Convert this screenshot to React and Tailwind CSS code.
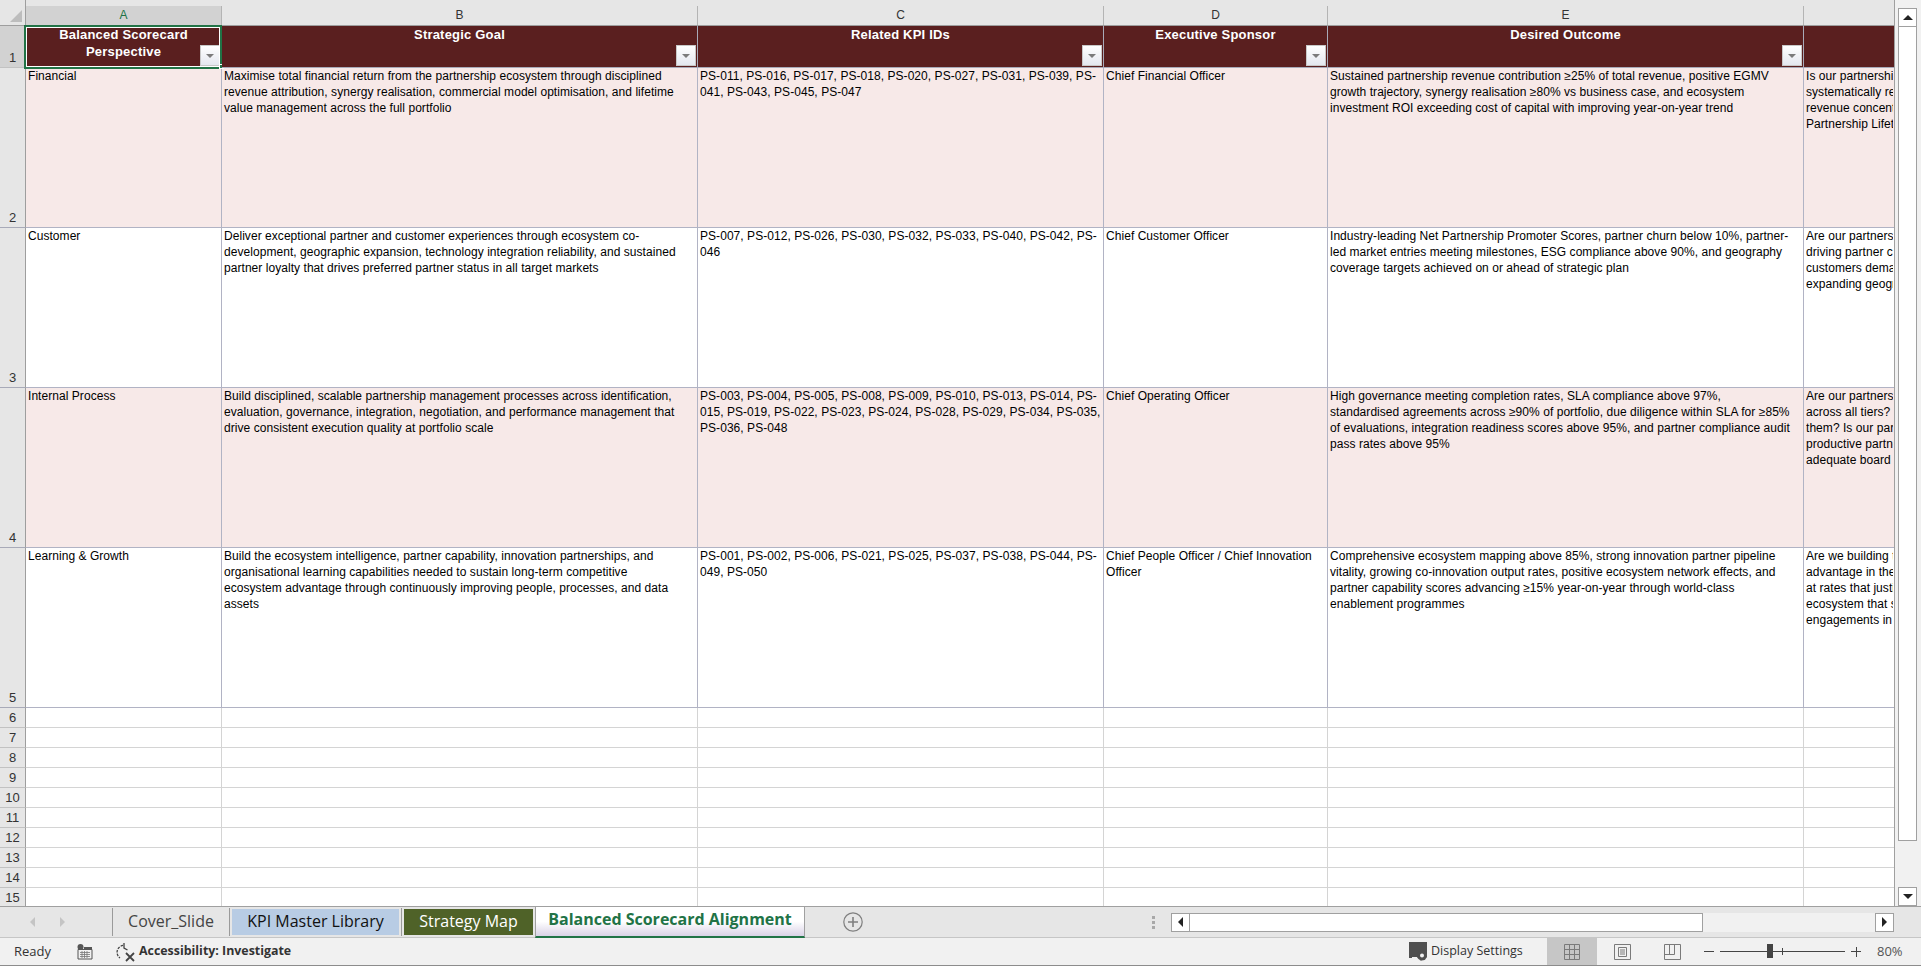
// Excel window: Balanced Scorecard Alignment sheet
import React from 'react';

const rows = [
  {
    rose: true,
    a: ['Financial'],
    b: [
      'Maximise total financial return from the partnership ecosystem through disciplined',
      'revenue attribution, synergy realisation, commercial model optimisation, and lifetime',
      'value management across the full portfolio',
    ],
    c: ['PS-011, PS-016, PS-017, PS-018, PS-020, PS-027, PS-031, PS-039, PS-', '041, PS-043, PS-045, PS-047'],
    d: ['Chief Financial Officer'],
    e: [
      'Sustained partnership revenue contribution ≥25% of total revenue, positive EGMV',
      'growth trajectory, synergy realisation ≥80% vs business case, and ecosystem',
      'investment ROI exceeding cost of capital with improving year-on-year trend',
    ],
    f: ['Is our partnership ecosystem', 'systematically reducing', 'revenue concentration', 'Partnership Lifetime'],
  },
  {
    a: ['Customer'],
    b: [
      'Deliver exceptional partner and customer experiences through ecosystem co-',
      'development, geographic expansion, technology integration reliability, and sustained',
      'partner loyalty that drives preferred partner status in all target markets',
    ],
    c: ['PS-007, PS-012, PS-026, PS-030, PS-032, PS-033, PS-040, PS-042, PS-', '046'],
    d: ['Chief Customer Officer'],
    e: [
      'Industry-leading Net Partnership Promoter Scores, partner churn below 10%, partner-',
      'led market entries meeting milestones, ESG compliance above 90%, and geography',
      'coverage targets achieved on or ahead of strategic plan',
    ],
    f: ['Are our partnerships', 'driving partner choice', 'customers demand', 'expanding geography'],
  },
  {
    rose: true,
    a: ['Internal Process'],
    b: [
      'Build disciplined, scalable partnership management processes across identification,',
      'evaluation, governance, integration, negotiation, and performance management that',
      'drive consistent execution quality at portfolio scale',
    ],
    c: [
      'PS-003, PS-004, PS-005, PS-008, PS-009, PS-010, PS-013, PS-014, PS-',
      '015, PS-019, PS-022, PS-023, PS-024, PS-028, PS-029, PS-034, PS-035,',
      'PS-036, PS-048',
    ],
    d: ['Chief Operating Officer'],
    e: [
      'High governance meeting completion rates, SLA compliance above 97%,',
      'standardised agreements across ≥90% of portfolio, due diligence within SLA for ≥85%',
      'of evaluations, integration readiness scores above 95%, and partner compliance audit',
      'pass rates above 95%',
    ],
    f: ['Are our partnerships', 'across all tiers? Can', 'them? Is our partner', 'productive partnering', 'adequate board'],
  },
  {
    a: ['Learning & Growth'],
    b: [
      'Build the ecosystem intelligence, partner capability, innovation partnerships, and',
      'organisational learning capabilities needed to sustain long-term competitive',
      'ecosystem advantage through continuously improving people, processes, and data',
      'assets',
    ],
    c: ['PS-001, PS-002, PS-006, PS-021, PS-025, PS-037, PS-038, PS-044, PS-', '049, PS-050'],
    d: ['Chief People Officer / Chief Innovation', 'Officer'],
    e: [
      'Comprehensive ecosystem mapping above 85%, strong innovation partner pipeline',
      'vitality, growing co-innovation output rates, positive ecosystem network effects, and',
      'partner capability scores advancing ≥15% year-on-year through world-class',
      'enablement programmes',
    ],
    f: ['Are we building the', 'advantage in the market', 'at rates that justify', 'ecosystem that sustains', 'engagements in'],
  },
];

const emptyRows = [6, 7, 8, 9, 10, 11, 12, 13, 14, 15];

function ColHead({ label, active }) {
  return (
    <div className="h-[26px] pt-[6px] bg-[#e6e6e6] border-b border-b-[#9e9e9e]">
      <div
        className={`h-[19px] border-r border-[#b4b4b4] text-center text-[12px] leading-[19px] ${active ? 'bg-[#d2d2d2] text-[#217346]' : 'text-[#333]'}`}
      >
        {label}
      </div>
    </div>
  );
}

function RowHead({ n, active, dark }) {
  return (
    <div
      className={`flex items-end justify-center border-r border-b border-r-[#9e9e9e] text-[13px] leading-[19px] text-[#333] ${active ? 'bg-[#d2d2d2]' : 'bg-[#e6e6e6]'} ${dark ? 'border-b-[#a8aab8]' : 'border-b-[#c2c2c2]'}`}
    >
      {n}
    </div>
  );
}

function FilterButton() {
  return (
    <div className="absolute right-[1px] bottom-[1px] w-[20px] h-[21px] bg-gradient-to-b from-white to-[#e4e7ef] border border-[#c8c8c8] flex items-center justify-center">
      <div className="w-0 h-0 border-x-[4px] border-x-transparent border-t-[4px] border-t-[#7b7b7b]" />
    </div>
  );
}

function HeadCell({ lines, filter = true, selected, last }) {
  return (
    <div
      className={`relative bg-[#5a1f1f] text-white font-bold text-[13px] leading-[17px] text-center border-b border-b-[#a8aab8] tracking-[0.2px] ${last ? '' : 'border-r border-r-[#a8aab8]'}`}
    >
      {lines.map((l) => (
        <div key={l} className="whitespace-nowrap">
          {l}
        </div>
      ))}
      {filter && <FilterButton />}
      {selected && (
        <>
          {/* active cell frame and fill handle */}
          <div className="absolute left-[-2px] top-[-1px] right-[-1px] bottom-[-2px] border-2 border-[#217346] shadow-[inset_0_0_0_1px_white]" />
          <div className="absolute right-[-3px] bottom-[-2px] w-[5px] h-[5px] bg-[#217346] border border-white" />
        </>
      )}
    </div>
  );
}

function Cell({ lines, rose, last }) {
  return (
    <div
      className={`overflow-hidden pl-[2px] text-[12px] leading-[16px] tracking-[0.05px] text-black border-b border-b-[#b1b3c4] ${rose ? 'bg-[#f7e9e8]' : 'bg-white'} ${last ? '' : 'border-r border-r-[#b1b3c4]'}`}
    >
      <div className={last ? 'w-[87px] overflow-hidden' : ''}>
        {lines.map((l) => (
          <div key={l} className="whitespace-nowrap">
            {l}
          </div>
        ))}
      </div>
    </div>
  );
}

function EmptyCell({ last }) {
  return <div className={`bg-white border-b border-b-[#d4d4d4] ${last ? '' : 'border-r border-r-[#d4d4d4]'}`} />;
}

function ScrollButton({ dir }) {
  const arrow = {
    up: 'border-x-[5px] border-x-transparent border-b-[5px] border-b-[#222]',
    down: 'border-x-[5px] border-x-transparent border-t-[5px] border-t-[#222]',
    left: 'border-y-[5px] border-y-transparent border-r-[5px] border-r-[#222]',
    right: 'border-y-[5px] border-y-transparent border-l-[5px] border-l-[#222]',
  }[dir];
  return (
    <div className="w-[19px] h-[19px] shrink-0 bg-white border border-[#a0a0a0] flex items-center justify-center">
      <div className={`w-0 h-0 ${arrow}`} />
    </div>
  );
}

function Tab({ children, className }) {
  return (
    <div className={`flex items-center justify-center h-[26px] pb-[3px] text-[16px] whitespace-nowrap ${className}`}>
      {children}
    </div>
  );
}

function TabDivider() {
  return <div className="w-px h-[28px] bg-[#9a9a9a] shrink-0" />;
}

function Sheet() {
  return (
    <div className="grid grid-cols-[26px_196px_476px_406px_224px_476px_91px] grid-rows-[26px_42px_160px_160px_160px_160px_repeat(10,20px)] h-[906px] overflow-hidden border-r border-[#a0a0a0] w-[1895px]">
      <div className="bg-[#e6e6e6] border-b border-r border-[#9e9e9e] flex items-end justify-end p-[3px]">
        <div className="w-0 h-0 border-l-[12px] border-l-transparent border-b-[12px] border-b-[#bdbdbd]" />
      </div>
      <ColHead label="A" active />
      <ColHead label="B" />
      <ColHead label="C" />
      <ColHead label="D" />
      <ColHead label="E" />
      <ColHead label="" />

      <RowHead n={1} active />
      <HeadCell lines={['Balanced Scorecard', 'Perspective']} selected />
      <HeadCell lines={['Strategic Goal']} />
      <HeadCell lines={['Related KPI IDs']} />
      <HeadCell lines={['Executive Sponsor']} />
      <HeadCell lines={['Desired Outcome']} />
      <HeadCell lines={['']} filter={false} last />

      {rows.map((r, i) => (
        <React.Fragment key={r.a[0]}>
          <RowHead n={i + 2} dark />
          <Cell lines={r.a} rose={r.rose} />
          <Cell lines={r.b} rose={r.rose} />
          <Cell lines={r.c} rose={r.rose} />
          <Cell lines={r.d} rose={r.rose} />
          <Cell lines={r.e} rose={r.rose} />
          <Cell lines={r.f} rose={r.rose} last />
        </React.Fragment>
      ))}

      {emptyRows.map((n) => (
        <React.Fragment key={n}>
          <RowHead n={n} />
          <EmptyCell />
          <EmptyCell />
          <EmptyCell />
          <EmptyCell />
          <EmptyCell />
          <EmptyCell last />
        </React.Fragment>
      ))}
    </div>
  );
}

function VerticalScroll() {
  return (
    <div className="w-[26px] h-[906px] bg-[#f1f1f1] flex flex-col pl-[3px] pt-[8px]">
      <ScrollButton dir="up" />
      <div className="w-[19px] h-[814px] bg-white border-x border-b border-[#a0a0a0]" />
      <div className="flex-1" />
      <ScrollButton dir="down" />
    </div>
  );
}

function TabBar() {
  return (
    <div className="relative flex h-[32px] bg-[#e6e6e6] border-t border-[#a0a0a0] border-b border-b-[#c6c6c6] w-[1921px] overflow-visible">
      {/* sheet nav arrows */}
      <div className="flex items-center w-[112px] pl-[30px] gap-[25px] shrink-0">
        <div className="w-0 h-0 border-y-[5px] border-y-transparent border-r-[5px] border-r-[#c4c4c4]" />
        <div className="w-0 h-0 border-y-[5px] border-y-transparent border-l-[5px] border-l-[#c4c4c4]" />
      </div>
      <div className="flex items-center h-[30px] font-['Open_Sans',sans-serif]">
        <TabDivider />
        <Tab className="w-[116px] text-[#444]">Cover_Slide</Tab>
        <TabDivider />
        <div className="w-[2px]" />
        <Tab className="w-[167px] bg-[#b8cce4] text-[#111]">KPI Master Library</Tab>
        <div className="w-[2px]" />
        <TabDivider />
        <div className="w-[2px]" />
        <Tab className="w-[129px] bg-[#4f6228] text-white">Strategy Map</Tab>
        <div className="w-[2px]" />
        <div className="relative h-[31px] w-[270px] -mt-[1px] -mb-[1px] pb-[4px] border-x border-[#a0a0a0] bg-gradient-to-b from-white from-50% to-[#d9d2e6] border-b-2 border-b-[#217346] flex items-center justify-center font-bold text-[#217346] text-[16px] whitespace-nowrap">
          Balanced Scorecard Alignment
        </div>
      </div>
      {/* new sheet button */}
      <div className="flex items-center ml-[38px]">
        <svg width="20" height="20" viewBox="0 0 20 20" fill="none" stroke="#7f7f7f">
          <circle cx="10" cy="10" r="9.2" strokeWidth="1.2" />
          <path d="M10 5v10M5 10h10" strokeWidth="1.6" />
        </svg>
      </div>
      {/* splitter dots */}
      <div className="flex flex-col justify-center gap-[2px] ml-[289px]">
        <div className="w-[3px] h-[3px] bg-[#a8a8a8]" />
        <div className="w-[3px] h-[3px] bg-[#a8a8a8]" />
        <div className="w-[3px] h-[3px] bg-[#a8a8a8]" />
      </div>
      {/* horizontal scrollbar */}
      <div className="flex items-center ml-[16px]">
        <div className="flex w-[723px] h-[19px] bg-[#f1f1f1]">
          <ScrollButton dir="left" />
          <div className="w-[513px] h-[19px] bg-white border-y border-r border-[#a0a0a0]" />
          <div className="flex-1" />
          <ScrollButton dir="right" />
        </div>
      </div>
    </div>
  );
}

function StatusBar() {
  return (
    <div className="flex items-center h-[28px] bg-[#f1f1f1] border-b border-[#8c8c8c] text-[13px] text-[#333] font-['Open_Sans',sans-serif] w-[1921px]">
      <span className="ml-[14px] w-[63px]">Ready</span>
      {/* macro record icon */}
      <svg width="16" height="16" viewBox="0 0 16 16" fill="none">
        <circle cx="3.5" cy="3" r="3" fill="#555" />
        <path d="M1 5.5h14V15H1z" stroke="#555" fill="#f1f1f1" />
        <path d="M7 3h8v3H7z" fill="#555" />
        <path d="M3 8.5h10M3 10.5h10M3 12.5h10M5 7v7M7.5 7v7M10 7v7" stroke="#777" strokeWidth="0.8" />
      </svg>
      {/* accessibility icon */}
      <svg className="ml-[23px]" width="20" height="20" viewBox="0 0 20 20" fill="none" stroke="#444" strokeWidth="1.3">
        <path d="M7 3.4A7 7 0 0 0 4 16" strokeDasharray="2.5 1.2" />
        <path d="M8 1v5l3.5 2" />
        <path d="M10 11l8 8M18 11l-8 8" strokeWidth="1.8" />
      </svg>
      <span className="ml-[3px] font-bold text-[#333] text-[12.4px] whitespace-nowrap">Accessibility: Investigate</span>
      <div className="flex-1" />
      {/* display settings icon */}
      <svg width="22" height="20" viewBox="0 0 22 20" className="mr-[1px]">
        <path d="M1 0h18v12h-8v3H4v1H1z" fill="#505050" />
        <circle cx="14" cy="13.5" r="5" fill="#505050" />
        <circle cx="14" cy="13.5" r="3.5" fill="none" stroke="#505050" strokeWidth="3" strokeDasharray="1.5 1.3" />
        <circle cx="14" cy="13.5" r="2" fill="#f1f1f1" />
      </svg>
      <span className="w-[116px] text-[12.5px] whitespace-nowrap">Display Settings</span>
      <div className="w-[50px] h-full bg-[#c6c6c6] flex items-center justify-center">
        <svg width="16" height="16" viewBox="0 0 16 16" fill="none" stroke="#7a7a7a">
          <path d="M.5.5h15v15H.5zM5.5.5v15M10.5.5v15M.5 5.5h15M.5 10.5h15" />
        </svg>
      </div>
      <div className="w-[50px] flex items-center justify-center">
        <svg width="17" height="16" viewBox="0 0 17 16" fill="none" stroke="#7a7a7a">
          <path d="M.5.5h16v15H.5z" />
          <path d="M4.5 3.5h8v9h-8zM6 6h5M6 8h5M6 10h5" />
        </svg>
      </div>
      <div className="w-[50px] flex items-center justify-center">
        <svg width="17" height="16" viewBox="0 0 17 16" fill="none" stroke="#7a7a7a">
          <path d="M.5.5h16v15H.5zM.5 10.5h10V.5M5.5.5v10" />
        </svg>
      </div>
      {/* zoom slider */}
      <div className="flex items-center ml-[7px] w-[157px]">
        <div className="w-[10px] h-px bg-[#444]" />
        <div className="relative ml-[6px] w-[125px] h-px bg-[#444]">
          <div className="absolute left-[47px] top-[-7px] w-[6px] h-[14px] bg-[#444]" />
          <div className="absolute left-[62px] top-[-3px] w-px h-[7px] bg-[#444]" />
        </div>
        <div className="relative ml-[6px] w-[10px] h-px bg-[#444]">
          <div className="absolute left-[4.5px] top-[-4.5px] w-px h-[10px] bg-[#444]" />
        </div>
      </div>
      <span className="ml-[16px] w-[44px] text-[#555]">80%</span>
    </div>
  );
}

export default function App() {
  return (
    <div className="w-[1921px] h-[966px] overflow-hidden font-['Liberation_Sans',Arial,sans-serif] bg-[#e6e6e6]">
      <div className="flex">
        <Sheet />
        <VerticalScroll />
      </div>
      <TabBar />
      <StatusBar />
    </div>
  );
}
